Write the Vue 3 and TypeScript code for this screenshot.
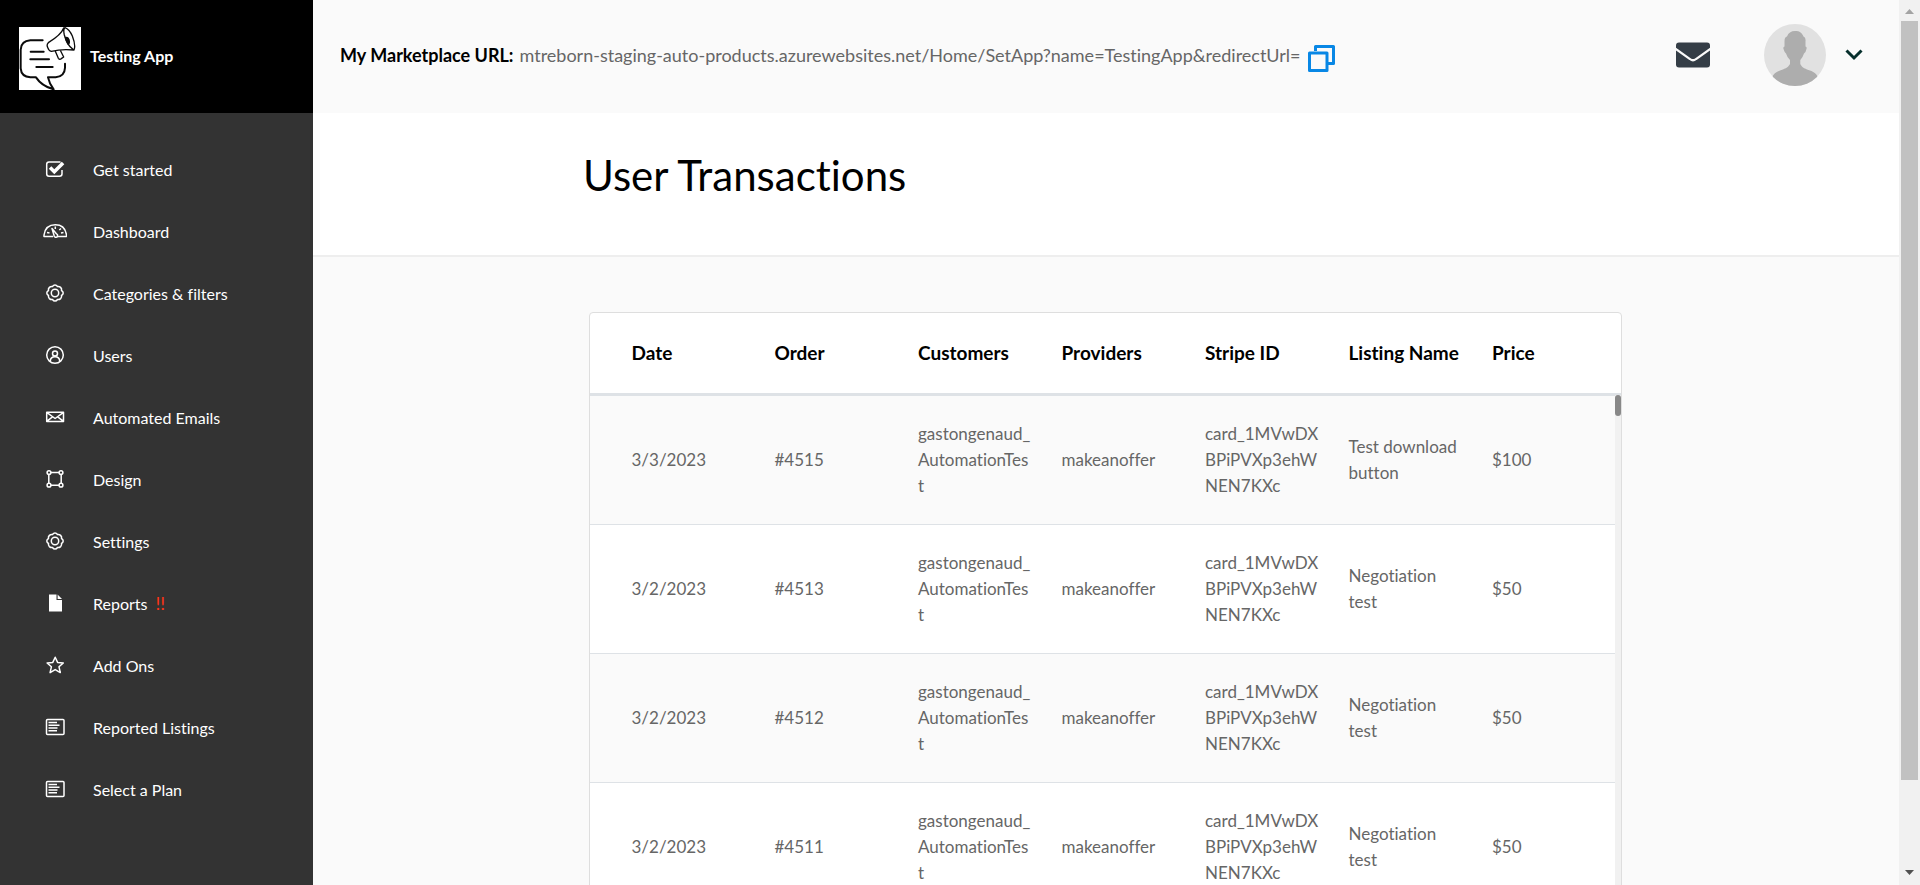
<script setup lang="ts">
interface NavItem {
  label: string
  icon: string
  alert?: string
}

interface Transaction {
  date: string
  order: string
  customer: string
  provider: string
  stripeId: string
  listing: string
  price: string
}

const navItems: NavItem[] = [
  { label: 'Get started', icon: 'check' },
  { label: 'Dashboard', icon: 'gauge' },
  { label: 'Categories & filters', icon: 'gear' },
  { label: 'Users', icon: 'user' },
  { label: 'Automated Emails', icon: 'mail' },
  { label: 'Design', icon: 'design' },
  { label: 'Settings', icon: 'gear' },
  { label: 'Reports', icon: 'file', alert: '!!' },
  { label: 'Add Ons', icon: 'star' },
  { label: 'Reported Listings', icon: 'list' },
  { label: 'Select a Plan', icon: 'list' },
]

const columns: string[] = ['Date', 'Order', 'Customers', 'Providers', 'Stripe ID', 'Listing Name', 'Price']

const base = {
  customer: 'gastongenaud_AutomationTest',
  provider: 'makeanoffer',
  stripeId: 'card_1MVwDXBPiPVXp3ehWNEN7KXc',
}

const transactions: Transaction[] = [
  { ...base, date: '3/3/2023', order: '#4515', listing: 'Test download button', price: '$100' },
  { ...base, date: '3/2/2023', order: '#4513', listing: 'Negotiation test', price: '$50' },
  { ...base, date: '3/2/2023', order: '#4512', listing: 'Negotiation test', price: '$50' },
  { ...base, date: '3/2/2023', order: '#4511', listing: 'Negotiation test', price: '$50' },
]

const marketplaceUrl = 'mtreborn-staging-auto-products.azurewebsites.net/Home/SetApp?name=TestingApp&redirectUrl='

function copyUrl(): void {
  navigator.clipboard?.writeText(marketplaceUrl)
}
</script>

<template>
  <div class="app">
    <aside class="sidebar">
      <a class="brand" href="#">
        <svg class="logo" viewBox="0 0 186 189" aria-hidden="true">
          <rect width="186" height="189" fill="#fff" />
          <g fill="none" stroke="#0b0b0b" stroke-width="6" stroke-linecap="round" stroke-linejoin="round">
            <path d="M71 40H34Q6 42 5 68V124Q7 149 34 151H51Q68 177 104 187Q91 170 87 151H110Q137 148 138 122V110" />
            <path d="M35 74H74M34 97H90M52 120H101" />
            <path stroke-width="4" d="M134 3Q127 23 88 47Q82 53 86 61Q89 71 97 73Q128 65 165 69Q171 55 160 27Q151 7 138 2Q132 6 136 24Q144 55 162 67M109 73L118 94Q122 99 127 95L134 90L125 72" />
          </g>
          <path fill="#0b0b0b" d="M137 30Q150 26 153 42Q154 54 146 53Q139 42 137 30Z" />
        </svg>
        <span>Testing App</span>
      </a>
      <nav class="nav" aria-label="Main">
        <a v-for="item in navItems" :key="item.label" class="nav-item" href="#">
          <svg class="nav-icon" viewBox="0 0 24 24" aria-hidden="true">
            <g v-if="item.icon === 'check'">
              <path class="line" d="M17.500 5H6Q3.700 5 3.700 7.300V16.700Q3.700 19.200 6 19.200H16.500Q19 19.200 19 16.700V13" />
              <path fill="#fff" d="M5.800 11.700L8.300 9.200L11.300 12.200L18.800 4.800L21.300 7.300L11.300 17.300Z" />
            </g>
            <g v-else-if="item.icon === 'gauge'" class="line">
              <path d="M10 17.500H1V16C2 9 6.500 5.800 12.300 5.800S22.500 9 23.500 16V17.500H14" />
              <path d="M9 9.500L11 16.200A1.800 1.800 0 1 0 13.600 14.900ZM12.300 7.500V10M4 13.500L6.500 14M20.500 13.500L18 14M18 9.500L16.300 11" />
            </g>
            <g v-else-if="item.icon === 'gear'" class="line">
              <path d="M12 4Q13.500 4 14.500 5.500Q16.200 5.100 17.600 6.400Q19 7.800 18.500 9.500Q20.200 10.500 20.200 12Q20.200 13.500 18.500 14.500Q19 16.200 17.600 17.600Q16.200 18.900 14.500 18.500Q13.500 20.100 12 20.100Q10.500 20.100 9.500 18.500Q7.800 18.900 6.400 17.600Q5 16.200 5.500 14.500Q3.800 13.500 3.800 12Q3.800 10.500 5.500 9.500Q5 7.800 6.400 6.400Q7.800 5.100 9.500 5.500Q10.500 4 12 4Z" />
              <circle cx="12" cy="12" r="3.700" />
            </g>
            <g v-else-if="item.icon === 'user'" class="line">
              <circle cx="12" cy="12" r="8.300" />
              <circle cx="12" cy="10.500" r="2.500" />
              <path d="M7.300 18Q7.500 13.700 12 13.700T16.700 18" />
            </g>
            <g v-else-if="item.icon === 'mail'" class="line">
              <path d="M3.700 7.300H20.500V16.500H3.700ZM4 7.600L12.100 13.500L20.200 7.600M4 16.200L9.500 11.800M20.200 16.200L14.700 11.800" />
            </g>
            <g v-else-if="item.icon === 'design'" class="line">
              <path d="M8 5.500H16M8 18.300H16M5.800 8V16M18.200 8V16" />
              <circle cx="6" cy="5.600" r="1.900" />
              <circle cx="18" cy="5.600" r="1.900" />
              <circle cx="6" cy="18.200" r="1.900" />
              <circle cx="18" cy="18.200" r="1.900" />
            </g>
            <g v-else-if="item.icon === 'file'" fill="#fff">
              <path d="M6 3.500H13.500V9H19V20.500H6Z" />
              <path d="M14.600 3.500L19 7.900H14.600Z" />
            </g>
            <g v-else-if="item.icon === 'star'" class="line">
              <path d="M12.200 4.200L14.600 9.400L20.300 10L16 13.800L17.300 19.600L12.200 16.600L7.100 19.600L8.400 13.800L4.100 10L9.800 9.400Z" />
            </g>
            <g v-else class="line">
              <rect x="3.500" y="4.500" width="17.500" height="15" rx="1" />
              <path stroke-width="1.400" d="M5.500 7.500H14M5.500 10.300H16.500M5.500 13H14.500M5.500 15.800H14" />
            </g>
          </svg>
          <span>{{ item.label }}</span>
          <span v-if="item.alert" class="alert">{{ item.alert }}</span>
        </a>
      </nav>
    </aside>

    <div class="content">
      <header class="topbar">
        <strong class="url-label">My Marketplace URL:</strong>
        <span class="url">{{ marketplaceUrl }}</span>
        <button class="copy" type="button" aria-label="Copy URL" @click="copyUrl">
          <svg width="28" height="28" viewBox="0 0 28 28" fill="none" stroke="#0887e5" stroke-width="3" stroke-linejoin="round">
            <path d="M8.500 7V2.500H26.500V19.500H21" />
            <rect x="2.500" y="9" width="17.500" height="17.500" />
          </svg>
        </button>
        <div class="account">
          <a class="mail" href="#" aria-label="Messages">
            <svg width="34" height="26" viewBox="0 0 34 26" aria-hidden="true">
              <rect y="0.500" width="34" height="25" rx="3" fill="#343d46" />
              <path d="M-1 6.500L14 17Q17 19.500 20 17L35 6.500" fill="none" stroke="#fafafa" stroke-width="2.200" />
            </svg>
          </a>
          <button class="profile" type="button" aria-label="Account menu">
            <svg width="62" height="62" viewBox="0 0 62 62" aria-hidden="true">
              <defs>
                <clipPath id="avatar-clip"><circle cx="31" cy="31" r="31" /></clipPath>
              </defs>
              <g clip-path="url(#avatar-clip)">
                <rect width="62" height="62" fill="#e1e1e1" />
                <path fill="#adadad" d="M31 7C36 7 38 9 39.500 12.500Q42 13.500 41.500 17V22.500Q43.300 23 42.300 25.500Q41.800 28.500 40 29.500Q39 33 36.300 36V40C38 44 42 45 46 46.500C50 48 53 50 54 54L48 62H14L8 54C9 50 12 48 16 46.500C20 45 24 44 26 40V36Q23 33 22 29.500Q20.500 28.500 19.700 25.500Q18.700 23 20.500 22.500V17Q20.500 13 23 12.500Q25 7 31 7Z" />
              </g>
            </svg>
            <svg width="18" height="12" viewBox="0 0 18 12" fill="none" stroke="#062f2c" stroke-width="3" aria-hidden="true">
              <path d="M1.500 1.500L9 9L16.500 1.500" />
            </svg>
          </button>
        </div>
      </header>

      <section class="heading">
        <h1>User Transactions</h1>
      </section>

      <main class="main">
        <div class="card">
          <table>
            <thead>
              <tr>
                <th v-for="column in columns" :key="column" scope="col">{{ column }}</th>
              </tr>
            </thead>
            <tbody>
              <tr v-for="row in transactions" :key="row.order">
                <td>{{ row.date }}</td>
                <td>{{ row.order }}</td>
                <td>{{ row.customer }}</td>
                <td>{{ row.provider }}</td>
                <td>{{ row.stripeId }}</td>
                <td>{{ row.listing }}</td>
                <td>{{ row.price }}</td>
              </tr>
            </tbody>
          </table>
          <div class="table-scroll" aria-hidden="true"><div class="table-thumb"></div></div>
        </div>
      </main>
    </div>

    <div class="page-scroll" aria-hidden="true">
      <svg viewBox="0 0 21 21"><path d="M6 14L10.500 9L15 14Z" fill="#a3a3a3" /></svg>
      <div class="page-track"><div class="page-thumb"></div></div>
      <svg viewBox="0 0 21 21"><path d="M6 6L10.500 11L15 6Z" fill="#505050" /></svg>
    </div>
  </div>
</template>

<style>
body {
  margin: 0;
  background: #fafafa;
}
</style>

<style scoped>
* {
  box-sizing: border-box;
}

.app {
  display: flex;
  height: 100vh;
  overflow: hidden;
  font-family: Lato, "Open Sans", sans-serif;
  font-variant-ligatures: none;
  color: #000;
}

a {
  color: inherit;
  text-decoration: none;
}

button {
  padding: 0;
  border: 0;
  background: none;
  cursor: pointer;
}

svg {
  display: block;
  flex: none;
}

.sidebar {
  flex: none;
  width: 313px;
  background: #333;
  color: #fff;
  font-size: 16px;
}

.brand {
  display: flex;
  align-items: flex-start;
  gap: 9px;
  height: 113px;
  padding: 27px 19px 0;
  background: #000;
  font-weight: 700;
  line-height: 58px;
}

.logo {
  width: 62px;
  height: 63px;
}

.nav {
  padding-top: 25px;
}

.nav-item {
  display: flex;
  align-items: center;
  height: 62px;
  padding-left: 43px;
}

.nav-icon {
  width: 24px;
  height: 24px;
  margin-right: 26px;
}

.line {
  fill: none;
  stroke: #fff;
  stroke-width: 1.5;
  stroke-linejoin: round;
}

.alert {
  margin-left: 8px;
  color: #ff3516;
  font-size: 18px;
}

.content {
  flex: 1;
  min-width: 0;
}

.topbar {
  display: flex;
  align-items: center;
  height: 113px;
  padding: 0 36px 4px 27px;
  font-size: 18px;
}

.url {
  margin: 0 6px;
  color: #666;
}

.copy {
  padding-top: 6px;
}

.account {
  display: flex;
  align-items: center;
  gap: 54px;
  margin-left: auto;
}

.profile {
  display: flex;
  align-items: center;
  gap: 19px;
}

.heading {
  height: 144px;
  padding: 36px 26px 0 24px;
  background: #fff;
  border-bottom: 2px solid #eee;
}

h1 {
  max-width: 1044px;
  margin: 0 auto;
  font-size: 42px;
  font-weight: 400;
  line-height: 52px;
}

.main {
  padding: 55px 26px 0 24px;
}

.card {
  position: relative;
  max-width: 1033px;
  margin: 0 auto;
  background: #fff;
  border: 1px solid #dedede;
  border-radius: 4px;
}

table {
  width: 100%;
  border-collapse: separate;
  border-spacing: 0;
  table-layout: fixed;
}

th,
td {
  padding: 25px 14px 25px 15px;
  text-align: left;
  vertical-align: middle;
  line-height: 26px;
}

th {
  padding-top: 27px;
  padding-bottom: 27px;
  border-bottom: 3px solid #dee2e6;
  font-size: 19px;
  font-weight: 700;
  white-space: nowrap;
}

th:first-child,
td:first-child {
  width: 170px;
  padding-left: 42px;
}

td {
  height: 129px;
  border-bottom: 1px solid #dee2e6;
  color: #666;
  font-size: 17px;
  overflow-wrap: break-word;
}

tbody tr:nth-child(odd) {
  background: #fafafa;
}

.table-scroll {
  position: absolute;
  top: 82px;
  right: 0;
  bottom: 0;
  width: 6px;
  background: #f1f1f1;
}

.table-thumb {
  height: 21px;
  border-radius: 3px;
  background: #888;
}

.page-scroll {
  display: flex;
  flex: none;
  flex-direction: column;
  width: 21px;
  background: #f1f1f1;
}

.page-track {
  flex: 1;
  padding: 0 2px;
}

.page-thumb {
  height: 90%;
  background: #c1c1c1;
}
</style>
